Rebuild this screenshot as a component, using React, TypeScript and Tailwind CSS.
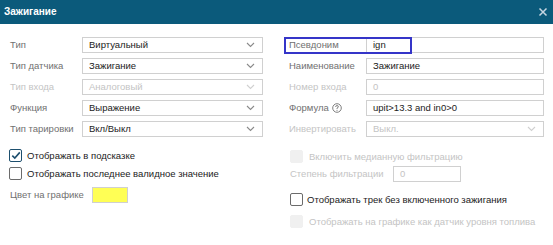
import React from "react";

const Chevron = ({ disabled }: { disabled?: boolean }) => (
  <svg width="9" height="6" viewBox="0 0 9 6" className="shrink-0">
    <path d="M1 1 L4.5 4.5 L8 1" fill="none" stroke={disabled ? "#d0d0d0" : "#8a8a8a"} strokeWidth="1.1" />
  </svg>
);

const Select = ({ value, disabled }: { value: string; disabled?: boolean }) => (
  <div className="flex h-[16px] flex-1 items-center justify-between border border-[#d0d0d0] bg-white pl-[6px] pr-[7px]">
    <span className={disabled ? "text-[#c4c4c4]" : "text-[#222]"}>{value}</span>
    <Chevron disabled={disabled} />
  </div>
);

const Input = ({ value, disabled, w }: { value: string; disabled?: boolean; w?: string }) => (
  <div className={`flex h-[16px] items-center border border-[#d0d0d0] bg-white pl-[6px] ${w ?? "flex-1"}`}>
    <span className={disabled ? "text-[#c4c4c4]" : "text-[#222]"}>{value}</span>
  </div>
);

const Check = ({ checked, disabled }: { checked?: boolean; disabled?: boolean }) => (
  <div
    className={`flex h-[13px] w-[13px] shrink-0 items-center justify-center rounded-[2px] border ${
      disabled ? "border-[#f0f0f0] bg-[#f0f0f0]" : checked ? "border-[#1d4f6e] bg-white" : "border-[#6b6b6b] bg-white"
    }`}
  >
    {checked && (
      <svg width="10" height="9" viewBox="0 0 10 9">
        <path d="M1.3 4.6 L3.8 7 L8.8 1.4" fill="none" stroke="#1d4f6e" strokeWidth="1.6" />
      </svg>
    )}
  </div>
);

export default function App() {
  return (
    <div
      className="relative h-[245px] w-[553px] overflow-hidden whitespace-nowrap bg-white text-[9.5px] leading-none"
      style={{ fontFamily: '"Liberation Sans", Arial, sans-serif' }}
    >
      <div className="flex h-[24px] items-center justify-between bg-[#0b5a7b] pl-[4px] pr-[5px]">
        <span className="text-[10px] font-bold text-white">Зажигание</span>
        <svg width="10" height="10" viewBox="0 0 10 10">
          <path d="M1.5 1.5 L8.5 8.5 M8.5 1.5 L1.5 8.5" stroke="#c7d6e2" strokeWidth="1.5" />
        </svg>
      </div>

      <div className="flex pt-[13px]">
        {/* left column */}
        <div className="ml-[10px] flex w-[253px] flex-col">
          <div className="flex flex-col gap-[5px]">
            <div className="flex items-center">
              <span className="w-[72px] text-[#707070]">Тип</span>
              <Select value="Виртуальный" />
            </div>
            <div className="flex items-center">
              <span className="w-[72px] text-[#707070]">Тип датчика</span>
              <Select value="Зажигание" />
            </div>
            <div className="flex items-center">
              <span className="w-[72px] text-[#c4c4c4]">Тип входа</span>
              <Select value="Аналоговый" disabled />
            </div>
            <div className="flex items-center">
              <span className="w-[72px] text-[#707070]">Функция</span>
              <Select value="Выражение" />
            </div>
            <div className="flex items-center">
              <span className="w-[72px] text-[#707070]">Тип тарировки</span>
              <Select value="Вкл/Выкл" />
            </div>
          </div>
          <div className="ml-[-1px] mt-[12px] flex flex-col gap-[5px]">
            <div className="flex items-center gap-[5px]">
              <Check checked />
              <span className="text-[#222]">Отображать в подсказке</span>
            </div>
            <div className="flex items-center gap-[5px]">
              <Check />
              <span className="text-[#222]">Отображать последнее валидное значение</span>
            </div>
          </div>
          <div className="mt-[7px] flex items-center">
            <span className="w-[82px] text-[#707070]">Цвет на графике</span>
            <div className="h-[16px] w-[36px] border border-[#d0d0d0] bg-[#ffff55]" />
          </div>
        </div>

        {/* right column */}
        <div className="relative ml-[21px] flex w-[260px] flex-col">
          <div className="pointer-events-none absolute left-0 top-[-0.5px] h-[17px] w-[128px] border-2 border-[#3535c8]" />
          <div className="flex flex-col gap-[5px]">
            <div className="flex items-center">
              <span className="w-[82px] pl-[5px] text-[#707070]">Псевдоним</span>
              <Input value="ign" />
            </div>
            <div className="flex items-center">
              <span className="w-[82px] pl-[5px] text-[#707070]">Наименование</span>
              <Input value="Зажигание" />
            </div>
            <div className="flex items-center">
              <span className="w-[82px] pl-[5px] text-[#c4c4c4]">Номер входа</span>
              <Input value="0" disabled />
            </div>
            <div className="flex items-center">
              <span className="flex w-[82px] items-center gap-[3px] pl-[5px] text-[#707070]">
                Формула
                <svg width="10" height="10" viewBox="0 0 10 10">
                  <circle cx="5" cy="5" r="4.3" fill="none" stroke="#707070" strokeWidth="0.9" />
                  <path d="M3.6 3.9 Q3.6 2.6 5 2.6 Q6.4 2.6 6.4 3.8 Q6.4 4.6 5 5.1 L5 5.9" fill="none" stroke="#707070" strokeWidth="0.9" />
                  <circle cx="5" cy="7.3" r="0.55" fill="#707070" />
                </svg>
              </span>
              <Input value="upit>13.3 and in0>0" />
            </div>
            <div className="flex items-center">
              <span className="w-[82px] pl-[5px] text-[#c4c4c4]">Инвертировать</span>
              <Select value="Выкл." disabled />
            </div>
          </div>
          <div className="ml-[6px] mt-[13px] flex flex-col">
            <div className="flex items-center gap-[6px]">
              <Check disabled />
              <span className="text-[#c4c4c4]">Включить медианную фильтрацию</span>
            </div>
            <div className="mt-[3px] flex items-center">
              <span className="w-[103px] text-[#c4c4c4]">Степень фильтрации</span>
              <Input value="0" disabled w="w-[68px]" />
            </div>
            <div className="mt-[11px] flex items-center gap-[4px]">
              <Check />
              <span className="text-[#222]">Отображать трек без включенного зажигания</span>
            </div>
            <div className="mt-[9px] flex items-center gap-[6px]">
              <Check disabled />
              <span className="text-[#c4c4c4]">Отображать на графике как датчик уровня топлива</span>
            </div>
          </div>
        </div>
      </div>
    </div>
  );
}
